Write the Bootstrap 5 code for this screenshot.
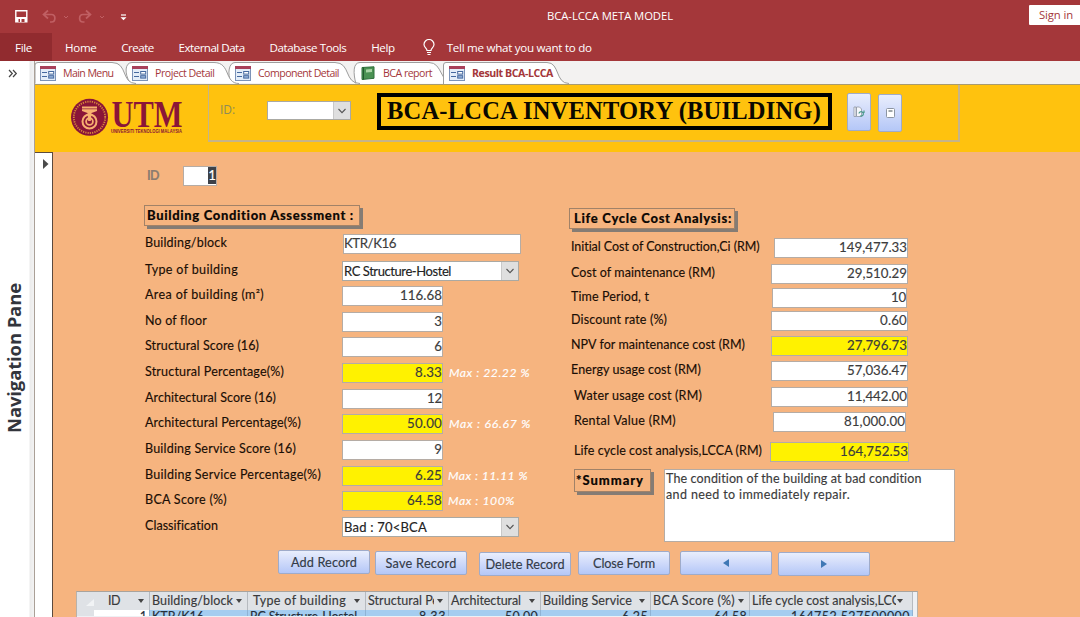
<!DOCTYPE html>
<html lang="en">
<head>
<meta charset="utf-8">
<title>BCA-LCCA META MODEL</title>
<meta name="viewport" content="width=device-width, initial-scale=1">
<link href="https://cdn.jsdelivr.net/npm/bootstrap@5.3.0/dist/css/bootstrap.min.css" rel="stylesheet">
<style>
:root{--ui:"Open Sans","Noto Sans",sans-serif;--form:Lato,"Liberation Sans",sans-serif}
html,body{height:617px;overflow:hidden}
body{font-family:var(--ui);font-size:11.6px;line-height:1;color:#111;background:#fff;width:1080px}
[data-w]{white-space:nowrap;display:inline-block}
.titlebar{height:33px;background:#a4373a;color:#fff}
.titlebar>*{flex:none}
.titlebar .qat{width:547px;padding-left:14px}
.apptitle{width:482px;font-size:11.3px;padding-bottom:1px}
.signin{width:60px;height:20px;margin-top:5px;background:#fff;color:#a4373a;padding:0 0 0 10px;border-radius:1px;font-size:11.3px}
.ribbon{height:28px;background:#a4373a;color:#fff}
.ribbon [data-w]{padding-top:1px}
.ribbon .file-tab{width:52px;height:28px;background:#912b2f;padding-left:15px}
.ribbon .m1{margin-left:13px}.ribbon .m2{margin-left:24.8px}
.ribbon .bulb{margin-left:28px;margin-right:12px}
.workspace{height:556px}
.navpane{width:35px;background:linear-gradient(90deg,#fff 29px,#ebebeb 30px,#f3f3f3 34px);border-right:1px solid #aaa097}
.navpane .chev{padding:6px 0 0 8px;height:222px}
.navpane .vlabel{writing-mode:vertical-rl;transform:rotate(180deg);font-weight:700;font-size:18.5px;color:#33353c;margin-left:4px;line-height:20px}
.tabstrip{height:23px;background:#f3f2f1;font-size:10.6px;color:#a4373a}
.tabstrip>svg.shape{position:absolute;left:0;top:0}
.tabstrip .doc{position:relative;height:23px;padding-top:1px}
.doc-a{width:92px;padding-left:5px}.doc-b{width:102px;padding-left:5px}.doc-c{width:125px;padding-left:6px}.doc-d{width:88px;padding-left:7px}.doc-e{padding-left:7px}
.doc svg{margin-right:7px;flex:none}.doc-d svg{margin-right:8px}
.formhead{height:68px;background:#ffc20e;border-top:1px solid #a89b6f}
.logo{width:173px;padding:12px 0 0 35px}
.headframe{width:752px;height:57px;border:solid #c5b48a;border-width:0 2px 2px 1px}
.headframe .idl{font-size:12px;color:#8d8b58;margin:19px 0 0 11px;width:47px}
.combo{background:#fff;border:1px solid #aaa9a3}
.combo .drop{width:17px;background:#dfdfdf;border-left:1px solid #c9c9c9;height:100%}
.combo-id{width:84px;height:19px;margin-top:16px}
.bigtitle{width:455px;height:37px;margin:8px 0 0 26px;border:4px solid #000;font:bold 24.5px/28px "Liberation Serif",serif;padding-left:6px;color:#0a0800}
.cmd{background:linear-gradient(#e9eefc,#cfdafa 50%,#b4c7f7);border:1px solid #9fabc9;border-radius:2px;color:#333b48;font:12.7px/1 var(--form);padding:0}
.cmd-s{width:24px;height:38px}
.cmd-refresh{margin:8px 0 0 15px}.cmd-page{margin:9px 0 0 7px}
.rec{width:18px;background:#fff;border-right:1px solid #5b4a3e;border-top:1px solid #5b4a3e;padding:4px 0 0 8px}
.detail{background:#f6b47f;font-family:var(--form);font-size:12.5px;height:465px;overflow:hidden;-webkit-text-stroke:.15px}
.idrow{height:34px;padding:14px 0 0 94px}
.idcap{width:36px;font-weight:700}
.idcap span{color:#8a7c70}
.fld{background:#fff;border:1px solid #b5aca5;height:20px;padding:0;color:#3c3c3c;font-size:13.3px;white-space:nowrap;overflow:hidden}
.fld.wide{padding-left:0}
.fld.idfld{width:34px}
.fld.hot{background:#fff200}
.sel1{background:#3d4148;color:#fff;height:17px;width:8px}
.cols{height:364px}
.colA{width:425px;padding:19px 0 0 91px}
.colB{padding:22px 0 0 91px}
.sec{border:1px solid #a18268;box-shadow:3px 3px 0 #857c74;font-weight:900;font-size:13px;height:21px;color:#0d0804}
.secA{width:216px;padding-left:2px}.secB{width:166px;padding-left:4px}.secC{width:77px;height:23px;padding-left:1px;margin-right:13px}
.ga{display:grid;grid-template-columns:198px 1fr;grid-template-rows:27px 25px 26px 25px 26px 26px 25px 26px 26px 25px 26px 20px;margin-top:8px;align-items:start;margin-right:-20px}
.gb{display:grid;grid-template-columns:202px 140px;grid-template-rows:26px 24px 23px 25px 25px 26px 25px 30px 20px;margin-top:9px;align-items:start}
.lab{height:20px;display:flex;align-items:center;color:#1a0e05}
.ga .lab,.gb .lab{padding-bottom:2px}
.ga .lab{padding-left:1px}
.ga .fld{width:101px}.ga .wide{width:178px;margin-left:1px}.ga .combo{width:177px;height:20px;color:#222;font-size:13px;padding-left:1px}
.maxi{color:#fff;font-style:italic;font-size:12.2px;margin-left:6px}
.maxi.near{margin-left:5px}
.gb .lab{padding-left:2px}.gb .lab.in{padding-left:5px}
.gb .fld{width:137px}.gb .fld.n1{width:134px;margin-left:3px}.gb .fld.n2{width:135px;margin-left:1px}.gb .fld.n3{width:133px;margin-left:2px}.gb .fld.n4{width:139px;margin-left:-1px}
.sumrow{margin-top:7px;padding-left:5px}
.memo{width:291px;height:73px;background:#fff;border:1px solid #b5aca5;padding:1px 0 0 1px;color:#3b3b3b;line-height:15.5px}
.btns{height:41px;padding-left:225px}
.btns .cmd{width:92px;height:24px}
.b2{margin:1px 0 0 5px}.b3{margin:2px 0 0 12px}.b4{margin:1px 0 0 7px}.b5{margin:1px 0 0 10px}.b6{margin:2px 0 0 6px}
.ds{margin-left:23px;width:842px;border-top:1px solid #a9a39c;border-left:1px solid #b9b2aa;border-right:1px solid #b9b2aa;background:#eef0f4;height:26px}
.dsrow{display:grid;grid-template-columns:17px 56px 98px 118px 83px 92px 110px 99px 163px;width:836px}
.dsrow.h{height:18px;background:#dfe2e6;color:#39393b}
.dsrow.h>div{border-right:1px solid #b6babf;padding-left:2px;display:flex;align-items:center;justify-content:space-between;overflow:hidden;padding-right:5px}
.dsrow.h>div:first-child{border:0;padding:0}
.dsrow.h>.idh{padding-left:14px}.dsrow.h>.th{padding-left:5px}
.dsrow.h .clip{overflow:hidden;white-space:nowrap;width:66px}
.dsrow.h .clip2{width:144px}
.dsrow.r{height:6px;overflow:hidden;background:#a5cdf0;color:#262f3a}
.dsrow.r>div{border-right:1px solid #8fb3d4;height:16px;padding:1px 2px 0;text-align:right;white-space:nowrap;overflow:hidden}
.dsrow.r>div:first-child{border:0;background:#dfe2e6}
.dsrow.r>div.l{text-align:left}
.tri{width:0;height:0;border:3px solid transparent;border-top:4px solid #444;border-bottom:0;flex:none}
</style>
</head>
<body>
<svg width="0" height="0" class="position-absolute">
  <defs>
    <symbol id="formicon" viewBox="0 0 16 15"><rect x=".5" y=".5" width="15" height="14" fill="#e4edf8" stroke="#7c93b8"/><rect x="0" y="0" width="16" height="3" fill="#a8405a"/><path d="M2 6.500h5M2 10.500h5" stroke="#46699f" stroke-width="1.200"/><rect x="8.700" y="5.500" width="5" height="2.600" fill="#fff" stroke="#46699f"/><rect x="8.700" y="9.700" width="5" height="2.400" fill="#9db8de" stroke="#46699f"/></symbol>
    <symbol id="down" viewBox="0 0 10 6"><path d="M1.500 1l3.500 3.600L8.500 1" fill="none" stroke="#555" stroke-width="1.100"/></symbol>
  </defs>
</svg>

<header class="titlebar d-flex">
  <div class="qat d-flex align-items-center">
    <svg width="120" height="16" viewBox="0 0 120 16">
      <path d="M1.800 1.800h11v11h-11z" fill="none" stroke="#fff" stroke-width="1.400"/><path d="M2 8h11v5h-11z" fill="#fff"/><path d="M4.500 10h1.500v3h-1.500zM7.500 10h3v3h-3z" fill="#a4373a"/>
      <g fill="none" stroke="#c05f63" stroke-width="1.700"><path d="M34 1.500l-4.500 4 4.500 4M30 5.500h7.500c4.500 0 4.500 7.500 0 7.500h-1.500"/><path d="M72 1.500l4.500 4-4.500 4M76 5.500h-7c-4.500 0-4.500 7.500 0 7.500h1.500"/><path d="M50 7l2 2 2-2M86 7l2 2 2-2" stroke-width="1"/></g>
      <path d="M107 6h5" stroke="#fff" stroke-width="1.200"/><path d="M106.500 8.200h6l-3 3z" fill="#fff"/>
    </svg>
  </div>
  <div class="apptitle d-flex align-items-center"><span data-w="126">BCA-LCCA META MODEL</span></div>
  <div class="signin d-flex align-items-center"><span data-w="34">Sign in</span></div>
</header>

<nav class="ribbon d-flex align-items-center">
  <div class="file-tab d-flex align-items-center"><span data-w="17">File</span></div>
  <span class="m1" data-w="31.500">Home</span>
  <span class="m2" data-w="32.500">Create</span>
  <span class="m2" data-w="66">External Data</span>
  <span class="m2" data-w="77">Database Tools</span>
  <span class="m2" data-w="23.500">Help</span>
  <svg class="bulb" width="12" height="17" viewBox="0 0 12 17"><path d="M4 11.500c0-2.500-3-3-3-6a5 5 0 0 1 10 0c0 3-3 3.500-3 6zM4 13.500h4M4.500 15.500h3" fill="none" stroke="#fff" stroke-width="1.200"/></svg>
  <span data-w="145">Tell me what you want to do</span>
</nav>

<div class="workspace d-flex">
  <aside class="navpane flex-shrink-0">
    <div class="chev"><svg width="10" height="9" viewBox="0 0 10 9"><path d="M1 1l3.300 3.500L1 8M5 1l3.300 3.500L5 8" fill="none" stroke="#444" stroke-width="1.200"/></svg></div>
    <span class="vlabel" data-w="150">Navigation Pane</span>
  </aside>

  <main class="flex-grow-1">
    <div class="tabstrip d-flex position-relative">
      <svg class="shape" width="1045" height="23" viewBox="0 0 1045 23">
        <g fill="#fff" stroke="#9d9d9d">
          <path d="M321 23C318 12 318 1.500 325 1.500H394C408 1.500 404 22.500 420 22.500"/>
          <path d="M196 22C192 12 194 1.500 200 1.500H300C316 1.500 309 22.500 325 22.500"/>
          <path d="M95 22C89 12 90 1.500 97 1.500H179C196 1.500 189 22.500 204 22.500"/>
          <path d="M0 22.500V4Q0 1.500 3 1.500H77C93 1.500 86 22.500 101 22.500"/>
          <path d="M408.500 23V4Q408.500 1.500 411 1.500H512C525 1.500 520 22.500 534 22.500"/>
        </g>
      </svg>
      <div class="doc doc-a d-flex align-items-center"><svg width="16" height="15"><use href="#formicon"/></svg><span data-w="50.500">Main Menu</span></div>
      <div class="doc doc-b d-flex align-items-center"><svg width="16" height="15"><use href="#formicon"/></svg><span data-w="59.500">Project Detail</span></div>
      <div class="doc doc-c d-flex align-items-center"><svg width="16" height="15"><use href="#formicon"/></svg><span data-w="81">Component Detail</span></div>
      <div class="doc doc-d d-flex align-items-center"><svg width="14" height="14" viewBox="0 0 14 14"><path d="M1 1.500L13 .8v11.500L1 13.500z" fill="#4a9152" stroke="#2e6f3a"/><path d="M5 3.500l6-.4v3l-6 .4z" fill="#a9d4a5"/><path d="M2.500 1.500v12" stroke="#225a2d"/></svg><span data-w="49">BCA report</span></div>
      <div class="doc doc-e d-flex align-items-center fw-bold"><svg width="16" height="15"><use href="#formicon"/></svg><span data-w="81">Result BCA-LCCA</span></div>
    </div>

    <div class="formhead d-flex">
      <div class="logo">
        <svg width="114" height="40" viewBox="0 0 114 40">
          <circle cx="19.500" cy="20.300" r="18.500" fill="#8a1538"/>
          <circle cx="19.500" cy="20.300" r="15.700" fill="none" stroke="#d98a3a" stroke-width="1.800" stroke-dasharray="1.200 1.100"/>
          <circle cx="19.500" cy="20.300" r="13.300" fill="#8a1538"/>
          <g fill="none" stroke="#f7b070"><circle cx="19.500" cy="24.500" r="7" stroke-width="2"/><circle cx="19.500" cy="24.500" r="3.400" stroke-width="1.800"/></g>
          <path d="M12 9.500h15v4.500l-5.500 2-.7 8h-2.600l-.7-8-5.500-2z" fill="#f7b070"/><path d="M12 11.800h15" stroke="#8a1538" stroke-width=".7"/>
          <text x="41.500" y="29.500" font-family="Liberation Serif" font-weight="700" font-size="37" fill="#8a1538" textLength="71" lengthAdjust="spacingAndGlyphs">UTM</text>
          <text x="41" y="35.500" font-family="Liberation Sans" font-weight="700" font-size="4.800" fill="#8a1538" textLength="71" lengthAdjust="spacingAndGlyphs">UNIVERSITI TEKNOLOGI MALAYSIA</text>
        </svg>
      </div>
      <div class="headframe d-flex">
        <div class="idl"><span data-w="15">ID:</span></div>
        <div class="combo combo-id d-flex justify-content-end"><div class="drop d-flex align-items-center justify-content-center"><svg width="10" height="6"><use href="#down"/></svg></div></div>
        <h1 class="bigtitle"><span data-w="434">BCA-LCCA INVENTORY (BUILDING)</span></h1>
        <button class="cmd cmd-s cmd-refresh d-flex align-items-center justify-content-center"><svg width="12" height="12" viewBox="0 0 12 12"><path d="M1 1h2v9.500H1zM3.500 1h3l2 2v7.500h-5z" fill="#f6f8fc" stroke="#858d9a" stroke-width=".7"/><path d="M6 7.500a2.200 2.200 0 1 1 1 2.200M11 4.500v2H9" fill="none" stroke="#4c9a8c" stroke-width="1.200"/></svg></button>
        <button class="cmd cmd-s cmd-page d-flex align-items-center justify-content-center"><svg width="9" height="10" viewBox="0 0 9 10"><rect x=".5" y=".5" width="8" height="9" rx="1" fill="#fff" stroke="#8c95a3"/><path d="M2.500 3h4" stroke="#3f4c52"/></svg></button>
      </div>
    </div>

    <div class="d-flex">
      <div class="rec flex-shrink-0"><svg width="6" height="10" viewBox="0 0 6 10"><path d="M0 0l5.500 5L0 10z" fill="#4b4b4b"/></svg></div>
      <section class="detail flex-grow-1">
        <div class="idrow d-flex">
          <div class="lab idcap"><span data-w="12">ID</span></div>
          <div class="fld idfld d-flex justify-content-end"><span class="sel1 d-flex align-items-center justify-content-center">1</span></div>
        </div>

        <div class="cols d-flex">
          <div class="colA">
            <div class="sec secA d-flex align-items-center"><span data-w="207">Building Condition Assessment :</span></div>
            <div class="ga">
              <div class="lab"><span data-w="82">Building/block</span></div><div class="fld wide d-flex align-items-center"><span data-w="52">KTR/K16</span></div>
              <div class="lab"><span data-w="93">Type of building</span></div><div class="combo d-flex align-items-center justify-content-between"><span data-w="107">RC Structure-Hostel</span><div class="drop d-flex align-items-center justify-content-center"><svg width="10" height="6"><use href="#down"/></svg></div></div>
              <div class="lab"><span data-w="119">Area of building (m²)</span></div><div class="fld d-flex align-items-center justify-content-end"><span data-w="42">116.68</span></div>
              <div class="lab"><span data-w="62">No of floor</span></div><div class="fld d-flex align-items-center justify-content-end"><span>3</span></div>
              <div class="lab"><span data-w="114">Structural Score (16)</span></div><div class="fld d-flex align-items-center justify-content-end"><span>6</span></div>
              <div class="lab"><span data-w="139">Structural Percentage(%)</span></div><div class="d-flex align-items-center"><div class="fld hot d-flex align-items-center justify-content-end"><span data-w="27">8.33</span></div><span class="maxi" data-w="81">Max : 22.22 %</span></div>
              <div class="lab"><span data-w="131">Architectural Score (16)</span></div><div class="fld d-flex align-items-center justify-content-end"><span data-w="15">12</span></div>
              <div class="lab"><span data-w="156">Architectural Percentage(%)</span></div><div class="d-flex align-items-center"><div class="fld hot d-flex align-items-center justify-content-end"><span data-w="35">50.00</span></div><span class="maxi" data-w="82">Max : 66.67 %</span></div>
              <div class="lab"><span data-w="151">Building Service Score (16)</span></div><div class="fld d-flex align-items-center justify-content-end"><span>9</span></div>
              <div class="lab"><span data-w="176">Building Service Percentage(%)</span></div><div class="d-flex align-items-center"><div class="fld hot d-flex align-items-center justify-content-end"><span data-w="27">6.25</span></div><span class="maxi near" data-w="80">Max : 11.11 %</span></div>
              <div class="lab"><span data-w="82">BCA Score (%)</span></div><div class="d-flex align-items-center"><div class="fld hot d-flex align-items-center justify-content-end"><span data-w="35">64.58</span></div><span class="maxi near" data-w="67">Max : 100%</span></div>
              <div class="lab"><span data-w="73">Classification</span></div><div class="combo d-flex align-items-center justify-content-between"><span data-w="83">Bad : 70&lt;BCA</span><div class="drop d-flex align-items-center justify-content-center"><svg width="10" height="6"><use href="#down"/></svg></div></div>
            </div>
          </div>

          <div class="colB">
            <div class="sec secB d-flex align-items-center"><span data-w="158">Life Cycle Cost Analysis:</span></div>
            <div class="gb">
              <div class="lab"><span data-w="189">Initial Cost of Construction,Ci (RM)</span></div><div class="fld n1 d-flex align-items-center justify-content-end"><span data-w="68">149,477.33</span></div>
              <div class="lab"><span data-w="144">Cost of maintenance (RM)</span></div><div class="fld d-flex align-items-center justify-content-end"><span data-w="60">29,510.29</span></div>
              <div class="lab"><span data-w="78">Time Period, t</span></div><div class="fld n2 d-flex align-items-center justify-content-end"><span data-w="15">10</span></div>
              <div class="lab"><span data-w="96">Discount rate (%)</span></div><div class="fld d-flex align-items-center justify-content-end"><span data-w="27">0.60</span></div>
              <div class="lab"><span data-w="174">NPV for maintenance cost (RM)</span></div><div class="fld hot d-flex align-items-center justify-content-end"><span data-w="60">27,796.73</span></div>
              <div class="lab"><span data-w="130">Energy usage cost (RM)</span></div><div class="fld d-flex align-items-center justify-content-end"><span data-w="60">57,036.47</span></div>
              <div class="lab in"><span data-w="128">Water usage cost (RM)</span></div><div class="fld d-flex align-items-center justify-content-end"><span data-w="60">11,442.00</span></div>
              <div class="lab in"><span data-w="102">Rental Value (RM)</span></div><div class="fld n3 d-flex align-items-center justify-content-end"><span data-w="61">81,000.00</span></div>
              <div class="lab in"><span data-w="188">Life cycle cost analysis,LCCA (RM)</span></div><div class="fld hot n4 d-flex align-items-center justify-content-end"><span data-w="68">164,752.53</span></div>
            </div>
            <div class="sumrow d-flex align-items-start">
              <div class="sec secC d-flex align-items-center"><span data-w="68">*Summary</span></div>
              <div class="memo"><span data-w="256">The condition of the building at bad condition</span><br><span data-w="184">and need to immediately repair.</span></div>
            </div>
          </div>
        </div>

        <div class="btns d-flex align-items-start">
          <button class="cmd"><span data-w="66">Add Record</span></button>
          <button class="cmd b2"><span data-w="71">Save Record</span></button>
          <button class="cmd b3"><span data-w="79">Delete Record</span></button>
          <button class="cmd b4"><span data-w="62">Close Form</span></button>
          <button class="cmd b5"><svg width="6" height="8" class="d-block mx-auto"><path d="M6 0L0 4l6 4z" fill="#3f78b5"/></svg></button>
          <button class="cmd b6"><svg width="6" height="8" class="d-block mx-auto"><path d="M0 0l6 4-6 4z" fill="#3f78b5"/></svg></button>
        </div>

        <div class="ds">
          <div class="dsrow h">
            <div class="align-items-end"><svg width="8" height="7" class="ms-auto mb-1"><path d="M8 0v7H0z" fill="#f1f3f5"/></svg></div>
            <div class="idh"><span data-w="12">ID</span><i class="tri"></i></div>
            <div><span data-w="81">Building/block</span><i class="tri"></i></div>
            <div class="th"><span data-w="93">Type of building</span><i class="tri"></i></div>
            <div><span class="clip"><span data-w="71">Structural Pe</span></span><i class="tri"></i></div>
            <div><span data-w="70">Architectural</span><i class="tri"></i></div>
            <div><span data-w="89">Building Service</span><i class="tri"></i></div>
            <div><span data-w="82">BCA Score (%)</span><i class="tri"></i></div>
            <div><span class="clip clip2"><span data-w="148">Life cycle cost analysis,LCC</span></span><i class="tri me-1"></i></div>
          </div>
          <div class="dsrow r">
            <div></div><div class="bg-white">1</div>
            <div class="l"><span data-w="52">KTR/K16</span></div><div class="l"><span data-w="107">RC Structure-Hostel</span></div>
            <div><span data-w="27">8.33</span></div><div><span data-w="33">50.00</span></div><div><span data-w="26">6.25</span></div><div><span data-w="33">64.58</span></div><div><span data-w="119">164752.527500000</span></div>
          </div>
        </div>
      </section>
    </div>
  </main>
</div>
<script src="https://cdn.jsdelivr.net/npm/bootstrap@5.3.0/dist/js/bootstrap.bundle.min.js"></script>
<script>
// Track each caption so that it fills the width given in data-w.
document.querySelectorAll('[data-w]').forEach(function (el) {
  var box = el.getBoundingClientRect();
  var len = el.classList.contains('vlabel') ? box.height : box.width;
  el.style.letterSpacing = ((parseFloat(el.dataset.w) - len) / el.textContent.length).toFixed(3) + 'px';
});
</script>
</body>
</html>
